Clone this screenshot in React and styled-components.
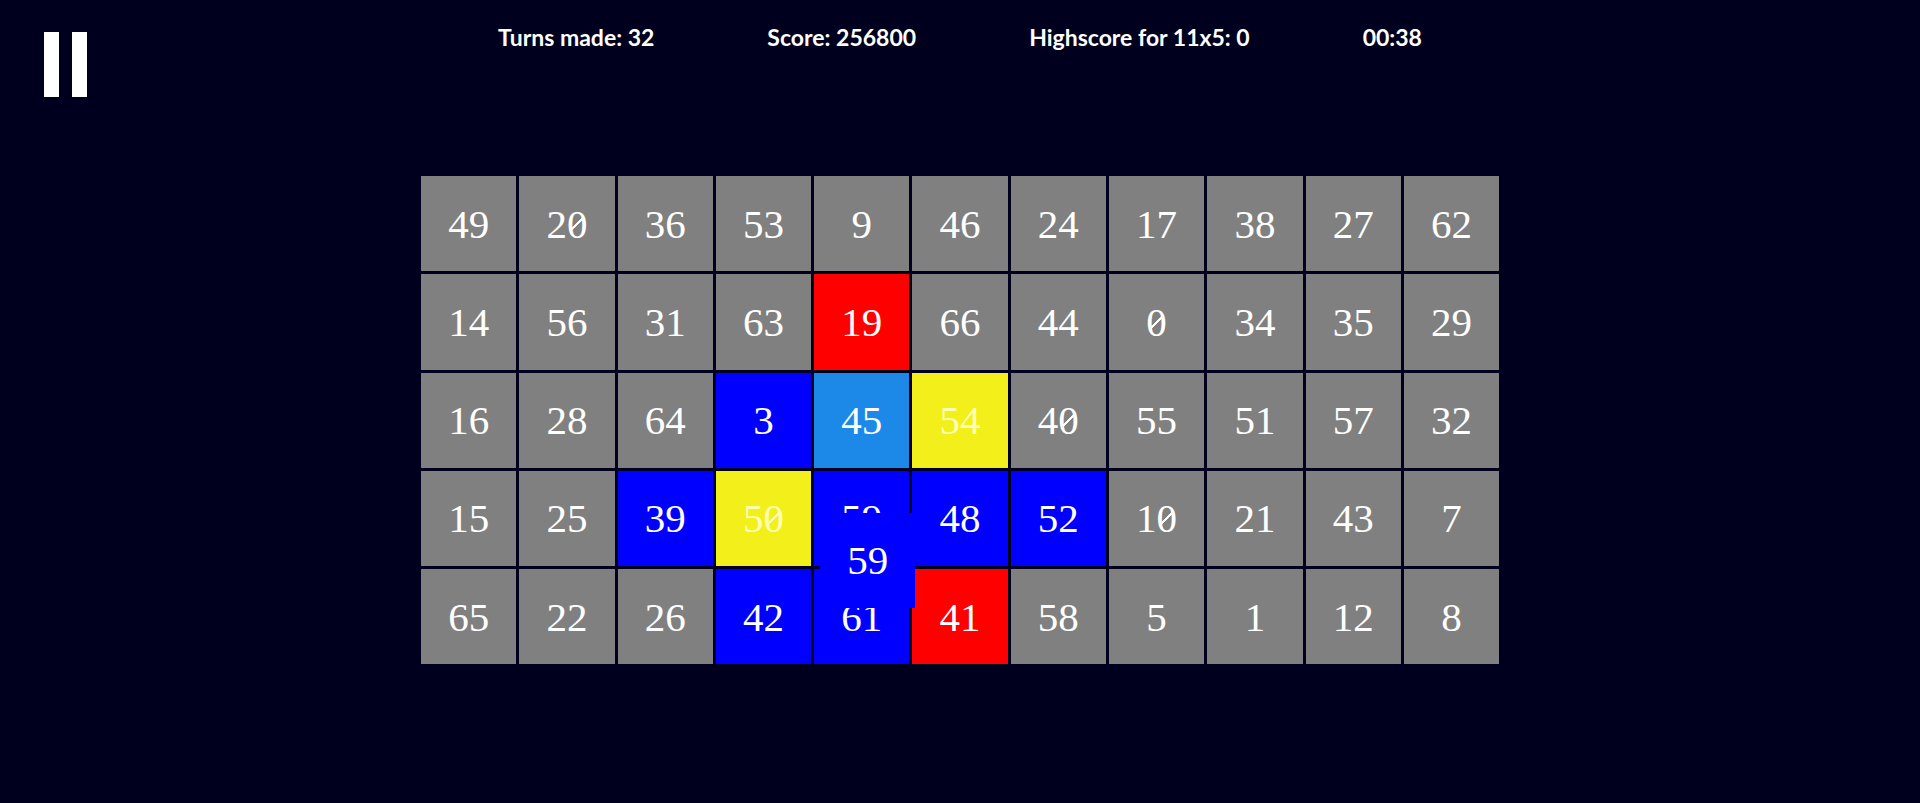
import React, { useState } from "react";
import styled, { createGlobalStyle } from "styled-components";

const GlobalStyle = createGlobalStyle`
  * {
    box-sizing: border-box;
  }

  body {
    margin: 0;
    background: #00001e;
    color: #ffffff;
  }
`;

const TILE_COLORS = {
  gray: "#808080",
  red: "#ff0000",
  blue: "#0000ff",
  sky: "#1c88e8",
  yellow: "#f3ef1a",
};

const BOARD = [
  [49, 20, 36, 53, 9, 46, 24, 17, 38, 27, 62],
  [14, 56, 31, 63, 19, 66, 44, 0, 34, 35, 29],
  [16, 28, 64, 3, 45, 54, 40, 55, 51, 57, 32],
  [15, 25, 39, 50, 59, 48, 52, 10, 21, 43, 7],
  [65, 22, 26, 42, 61, 41, 58, 5, 1, 12, 8],
];

const TONES = {
  19: "red",
  41: "red",
  45: "sky",
  50: "yellow",
  54: "yellow",
  3: "blue",
  39: "blue",
  42: "blue",
  48: "blue",
  52: "blue",
  59: "blue",
  61: "blue",
};

// the tile being dragged and how far it is from its cell
const DRAGGED = { value: 59, x: 6, y: 42 };

const Page = styled.div`
  min-height: 100vh;
  display: flex;
  flex-direction: column;
  gap: 79px;
`;

const Header = styled.header`
  display: grid;
  grid-template-columns: 1fr auto 1fr;
  align-items: start;
  padding: 0 44px;
`;

const PauseButton = styled.button`
  display: flex;
  gap: 13px;
  justify-self: start;
  margin-top: 32px;
  padding: 0;
  background: none;
  border: none;
  cursor: pointer;
`;

const PauseBar = styled.span`
  width: 15px;
  height: 65px;
  background: #ffffff;
`;

const Stats = styled.div`
  display: flex;
  gap: 113px;
  padding-top: 23px;
  font-family: Lato, "Liberation Sans", sans-serif;
  font-weight: 700;
  font-size: 23px;
  line-height: 28px;
  white-space: nowrap;
`;

const Board = styled.main`
  display: grid;
  grid-template-columns: repeat(11, 1fr);
  gap: 3px;
  width: 100%;
  max-width: 1078px;
  margin: 0 auto;
`;

const Cell = styled.div`
  position: relative;
  aspect-ratio: 1;
`;

const Tile = styled.button`
  display: flex;
  align-items: center;
  justify-content: center;
  width: 100%;
  height: 100%;
  padding: 0;
  border: none;
  background: ${({ $tone }) => TILE_COLORS[$tone]};
  color: ${({ $tone }) => ($tone === "yellow" ? "#ffffb4" : "#ffffff")};
  font-family: "Liberation Serif", serif;
  font-size: 41px;
  line-height: 48px;
  cursor: grab;
`;

const DraggedTile = styled(Tile)`
  position: absolute;
  top: ${DRAGGED.y}px;
  left: ${DRAGGED.x}px;
  z-index: 1;
  cursor: grabbing;
`;

// zeros carry a thin slash so they are not read as the letter O
const Zero = styled.span`
  background: linear-gradient(
      to top left,
      transparent 43%,
      currentColor 46%,
      currentColor 54%,
      transparent 57%
    )
    center / 14px 14px no-repeat;
`;

function TileNumber({ value }) {
  return (
    <span>
      {String(value)
        .split("")
        .map((digit, i) => (digit === "0" ? <Zero key={i}>0</Zero> : digit))}
    </span>
  );
}

function App() {
  const [paused, setPaused] = useState(false);

  return (
    <>
      <GlobalStyle />
      <Page>
        <Header>
          <PauseButton
            type="button"
            aria-label="Pause"
            aria-pressed={paused}
            onClick={() => setPaused(!paused)}
          >
            <PauseBar />
            <PauseBar />
          </PauseButton>
          <Stats>
            <span>Turns made: 32</span>
            <span>Score: 256800</span>
            <span>Highscore for 11x5: 0</span>
            <span>00:38</span>
          </Stats>
        </Header>

        <Board>
          {BOARD.flat().map((value) => {
            const tone = TONES[value] || "gray";
            return (
              <Cell key={value}>
                <Tile type="button" $tone={tone} disabled={paused}>
                  <TileNumber value={value} />
                </Tile>
                {value === DRAGGED.value && (
                  <DraggedTile type="button" $tone={tone}>
                    <TileNumber value={value} />
                  </DraggedTile>
                )}
              </Cell>
            );
          })}
        </Board>
      </Page>
    </>
  );
}

export default App;
